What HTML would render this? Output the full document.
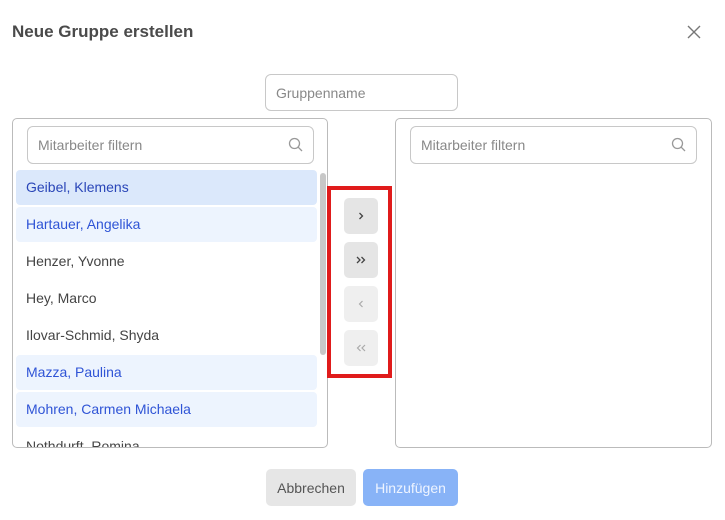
<!DOCTYPE html>
<html><head><meta charset="utf-8"><style>
*{box-sizing:border-box;margin:0;padding:0}
body{width:725px;height:520px;background:#fff;font-family:"Liberation Sans",sans-serif;position:relative;overflow:hidden}
.abs{position:absolute}
.title{left:12px;top:22px;font-size:17px;font-weight:bold;color:#4a4a4a}
.close{left:686px;top:24px;width:16px;height:16px}
.inp{border:1px solid #c8c8c8;border-radius:6px;color:#888;font-size:14px;padding-left:10px;display:flex;align-items:center}
.panel{border:1px solid #bbb;border-radius:5px;overflow:hidden}
.item{position:absolute;left:3px;width:301px;height:35px;border-radius:4px;font-size:14px;padding-left:10px;line-height:35px;color:#444}
.sel{background:#dbe8fb;color:#2a46b8}
.hl{background:#edf4fe;color:#2f54d6}
.btn{position:absolute;left:344px;width:34px;height:36px;border-radius:5px;background:#e5e5e5;display:flex;align-items:center;justify-content:center}
.dis{background:#efefef}
.sicon{position:absolute;right:9px;top:10px}
</style></head><body>
<div class="abs title">Neue Gruppe erstellen</div>
<svg class="abs close" viewBox="0 0 16 16"><path d="M2 2L14 14M14 2L2 14" stroke="#777" stroke-width="1.4"/></svg>
<div class="abs inp" style="left:265px;top:74px;width:193px;height:37px">Gruppenname</div>

<div class="abs panel" style="left:12px;top:118px;width:316px;height:330px">
  <div class="abs inp" style="left:14px;top:7px;width:287px;height:38px">Mitarbeiter filtern
    <svg class="sicon" width="16" height="16" viewBox="0 0 16 16"><circle cx="6.5" cy="6.5" r="5" fill="none" stroke="#999" stroke-width="1.3"/><path d="M10.2 10.2L14 14" stroke="#999" stroke-width="1.3"/></svg></div>
  <div class="item sel" style="top:51px">Geibel, Klemens</div>
  <div class="item hl" style="top:88px">Hartauer, Angelika</div>
  <div class="item" style="top:125px">Henzer, Yvonne</div>
  <div class="item" style="top:162px">Hey, Marco</div>
  <div class="item" style="top:199px">Ilovar-Schmid, Shyda</div>
  <div class="item hl" style="top:236px">Mazza, Paulina</div>
  <div class="item hl" style="top:273px">Mohren, Carmen Michaela</div>
  <div class="item" style="top:310px">Nothdurft, Romina</div>
  <div class="abs" style="left:307px;top:54px;width:6px;height:182px;background:#c8c8c8;border-radius:3px"></div>
</div>

<div class="abs" style="left:327px;top:186px;width:65px;height:192px;border:4px solid #e01b1b"></div>
<div class="btn" style="top:198px"><svg width="12" height="12" viewBox="0 0 12 12"><path d="M4.5 3L7.5 6L4.5 9" fill="none" stroke="#444" stroke-width="1.3"/></svg></div>
<div class="btn" style="top:242px"><svg width="12" height="12" viewBox="0 0 12 12"><path d="M2 3L5 6L2 9M6.5 3L9.5 6L6.5 9" fill="none" stroke="#444" stroke-width="1.3"/></svg></div>
<div class="btn dis" style="top:286px"><svg width="12" height="12" viewBox="0 0 12 12"><path d="M7.5 3L4.5 6L7.5 9" fill="none" stroke="#aaa" stroke-width="1.2"/></svg></div>
<div class="btn dis" style="top:330px"><svg width="12" height="12" viewBox="0 0 12 12"><path d="M5.5 3L2.5 6L5.5 9M10 3L7 6L10 9" fill="none" stroke="#aaa" stroke-width="1.2"/></svg></div>

<div class="abs panel" style="left:395px;top:118px;width:317px;height:330px">
  <div class="abs inp" style="left:14px;top:7px;width:287px;height:38px">Mitarbeiter filtern
    <svg class="sicon" width="16" height="16" viewBox="0 0 16 16"><circle cx="6.5" cy="6.5" r="5" fill="none" stroke="#999" stroke-width="1.3"/><path d="M10.2 10.2L14 14" stroke="#999" stroke-width="1.3"/></svg></div>
</div>

<div class="abs" style="left:266px;top:469px;width:90px;height:37px;background:#e6e6e6;border-radius:5px;color:#555;font-size:14px;display:flex;align-items:center;justify-content:center">Abbrechen</div>
<div class="abs" style="left:363px;top:469px;width:95px;height:37px;background:#88b3f7;border-radius:5px;color:#eef4ff;font-size:14px;display:flex;align-items:center;justify-content:center">Hinzufügen</div>
</body></html>
